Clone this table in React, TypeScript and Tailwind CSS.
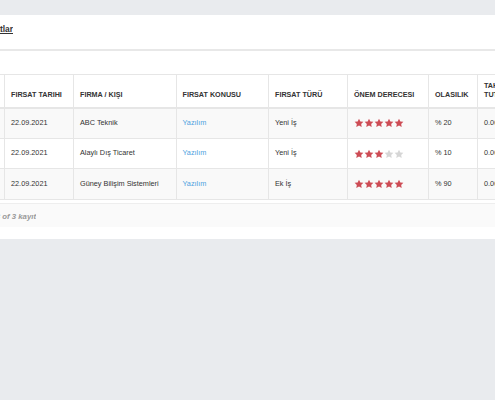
import React from "react";

const rows = [
  { date: "22.09.2021", firm: "ABC Teknik", topic: "Yazılım", type: "Yeni İş", stars: 5, prob: "% 20", amount: "0.00 TL" },
  { date: "22.09.2021", firm: "Alaylı Dış Ticaret", topic: "Yazılım", type: "Yeni İş", stars: 3, prob: "% 10", amount: "0.00 TL" },
  { date: "22.09.2021", firm: "Güney Bilişim Sistemleri", topic: "Yazılım", type: "Ek İş", stars: 5, prob: "% 90", amount: "0.00 TL" },
];

function Star({ on }: { on: boolean }) {
  return (
    <svg viewBox="0 0 24 24" className="w-[10px] h-[10px] block">
      <polygon
        points="12,1.5 15.2,8.1 22.5,9.1 17.2,14.2 18.5,21.5 12,18 5.5,21.5 6.8,14.2 1.5,9.1 8.8,8.1"
        fill={on ? "#cd4c55" : "#d6d6d6"}
      />
    </svg>
  );
}

export default function App() {
  const th = "border-x border-[#e6e6e6] px-[6px] pb-[7px] align-bottom text-left font-bold text-[7.2px] leading-[8.7px] text-[#333]";
  const td = "border-x border-[#e6e6e6] px-[6px] align-middle text-[7.3px] text-[#333] whitespace-nowrap";
  return (
    <div
      className="w-[495px] h-[400px] overflow-hidden bg-[#e9ebee] pt-[15px]"
      style={{ fontFamily: '"Liberation Sans", Arial, sans-serif' }}
    >
      <div className="bg-white">
        <div className="h-[34px] flex items-start pt-[8px]">
          <div className="w-[13px] overflow-hidden flex justify-end">
            <a className="whitespace-nowrap text-[8.4px] font-bold text-[#333] underline">Fırsatlar</a>
          </div>
        </div>
        <div className="h-[2px] bg-[#e8e8e8]" />
        <div className="pt-[23px] overflow-hidden">
          <table className="table-fixed border-collapse ml-[-26px] w-[620px]">
            <colgroup>
              <col className="w-[30px]" />
              <col className="w-[69px]" />
              <col className="w-[102.5px]" />
              <col className="w-[92.5px]" />
              <col className="w-[79px]" />
              <col className="w-[81px]" />
              <col className="w-[49px]" />
              <col className="w-[48px]" />
              <col className="w-[69px]" />
            </colgroup>
            <thead>
              <tr className="h-[33px] border-t border-b-2 border-[#e6e6e6]">
                <th className={th}>#</th>
                <th className={th}>FIRSAT TARIHI</th>
                <th className={th}>FIRMA / KIŞI</th>
                <th className={th}>FIRSAT KONUSU</th>
                <th className={th}>FIRSAT TÜRÜ</th>
                <th className={th}>ÖNEM DERECESI</th>
                <th className={th}>OLASILIK</th>
                <th className={th}>TAHSİLAT TUTARI</th>
                <th className={th}>İŞLEMLER</th>
              </tr>
            </thead>
            <tbody>
              {rows.map((r, i) => (
                <tr key={i} className={`h-[30.7px] border-b border-[#e6e6e6] ${i % 2 === 0 ? "bg-[#f9f9f9]" : "bg-white"}`}>
                  <td className={td}>{i + 1}</td>
                  <td className={td}>{r.date}</td>
                  <td className={td}>{r.firm}</td>
                  <td className={`${td} !text-[#4ea2e0]`}>{r.topic}</td>
                  <td className={td}>{r.type}</td>
                  <td className={td}>
                    <div className="flex">
                      {[0, 1, 2, 3, 4].map((s) => (
                        <Star key={s} on={s < r.stars} />
                      ))}
                    </div>
                  </td>
                  <td className={td}>{r.prob}</td>
                  <td className={td}>{r.amount}</td>
                  <td className={td}></td>
                </tr>
              ))}
            </tbody>
          </table>
        </div>
        <div className="mt-[3px] h-[24px] border-t border-[#eeeeee] bg-[#fafafa] flex items-center pt-[3px]">
          <div className="w-[36px] overflow-hidden flex justify-end">
            <span className="whitespace-nowrap italic font-bold text-[7.8px] text-[#999]">1 - 3 of 3 kayıt</span>
          </div>
        </div>
        <div className="h-[12px]" />
      </div>
    </div>
  );
}
